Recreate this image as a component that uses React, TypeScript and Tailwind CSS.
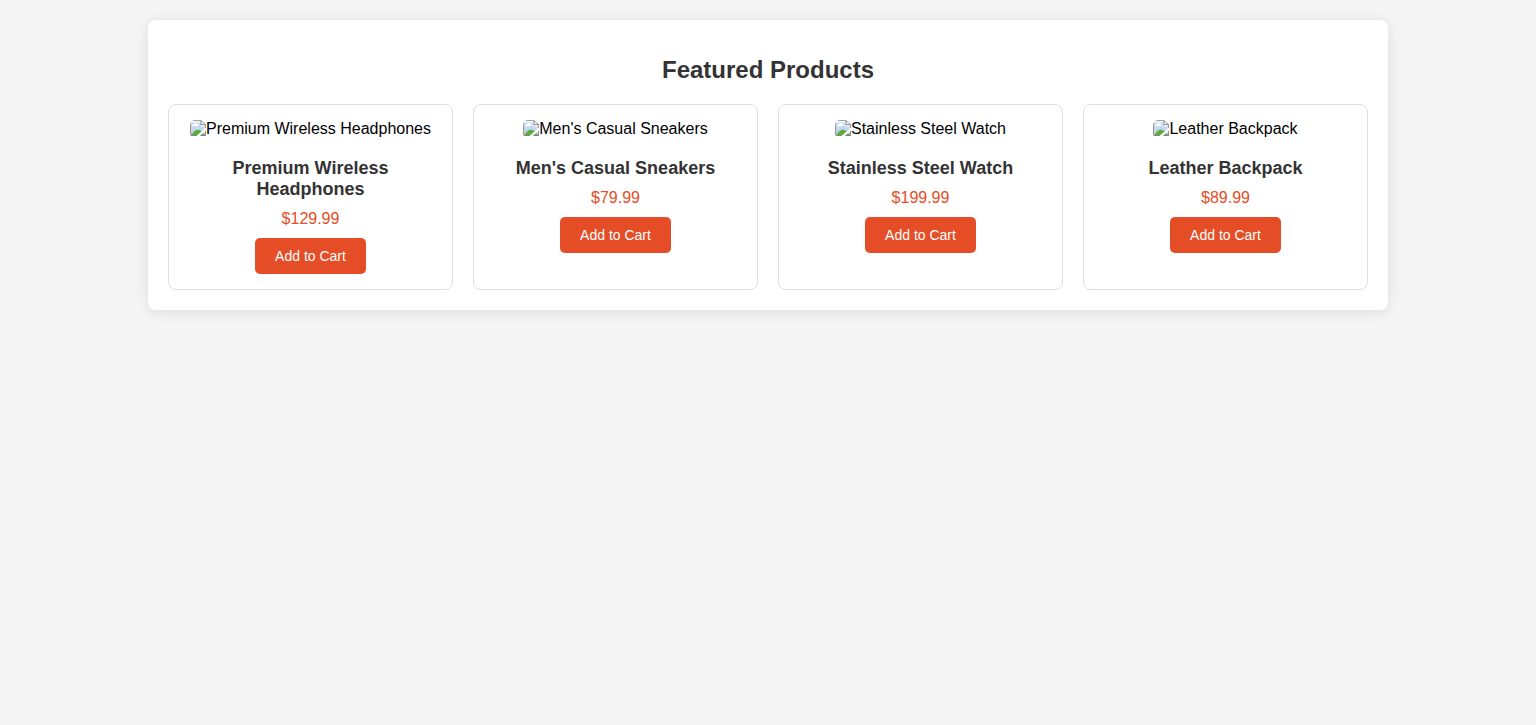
const products = [
  { name: "Premium Wireless Headphones", price: "$129.99" },
  { name: "Men's Casual Sneakers", price: "$79.99" },
  { name: "Stainless Steel Watch", price: "$199.99" },
  { name: "Leather Backpack", price: "$89.99" },
];

export default function App() {
  return (
    <div className="min-h-screen bg-[#f5f5f5] p-5 font-['Liberation_Sans',Arial,sans-serif] text-black">
      <main className="mx-auto max-w-[1240px] rounded-lg bg-white p-5 text-center shadow-[0_2px_15px_rgba(0,0,0,0.1)]">
        <h2 className="mt-4 mb-5 text-2xl leading-7 font-bold text-[#333]">Featured Products</h2>
        <div className="grid grid-cols-4 gap-5">
          {products.map((product) => (
            <article key={product.name} className="rounded-lg border border-[#e0e0e0] p-[15px]">
              <img src="#" alt={product.name} className="mx-auto block w-fit max-w-full rounded-[5px] text-base leading-[18px]" />
              <h3 className="mt-5 mb-2.5 text-lg leading-[21px] font-bold text-[#333]">{product.name}</h3>
              <p className="mb-2.5 text-base leading-[18px] text-[#e44d26]">{product.price}</p>
              <button className="cursor-pointer rounded-[5px] bg-[#e44d26] px-5 py-2.5 text-sm leading-4 text-white">Add to Cart</button>
            </article>
          ))}
        </div>
      </main>
    </div>
  );
}
